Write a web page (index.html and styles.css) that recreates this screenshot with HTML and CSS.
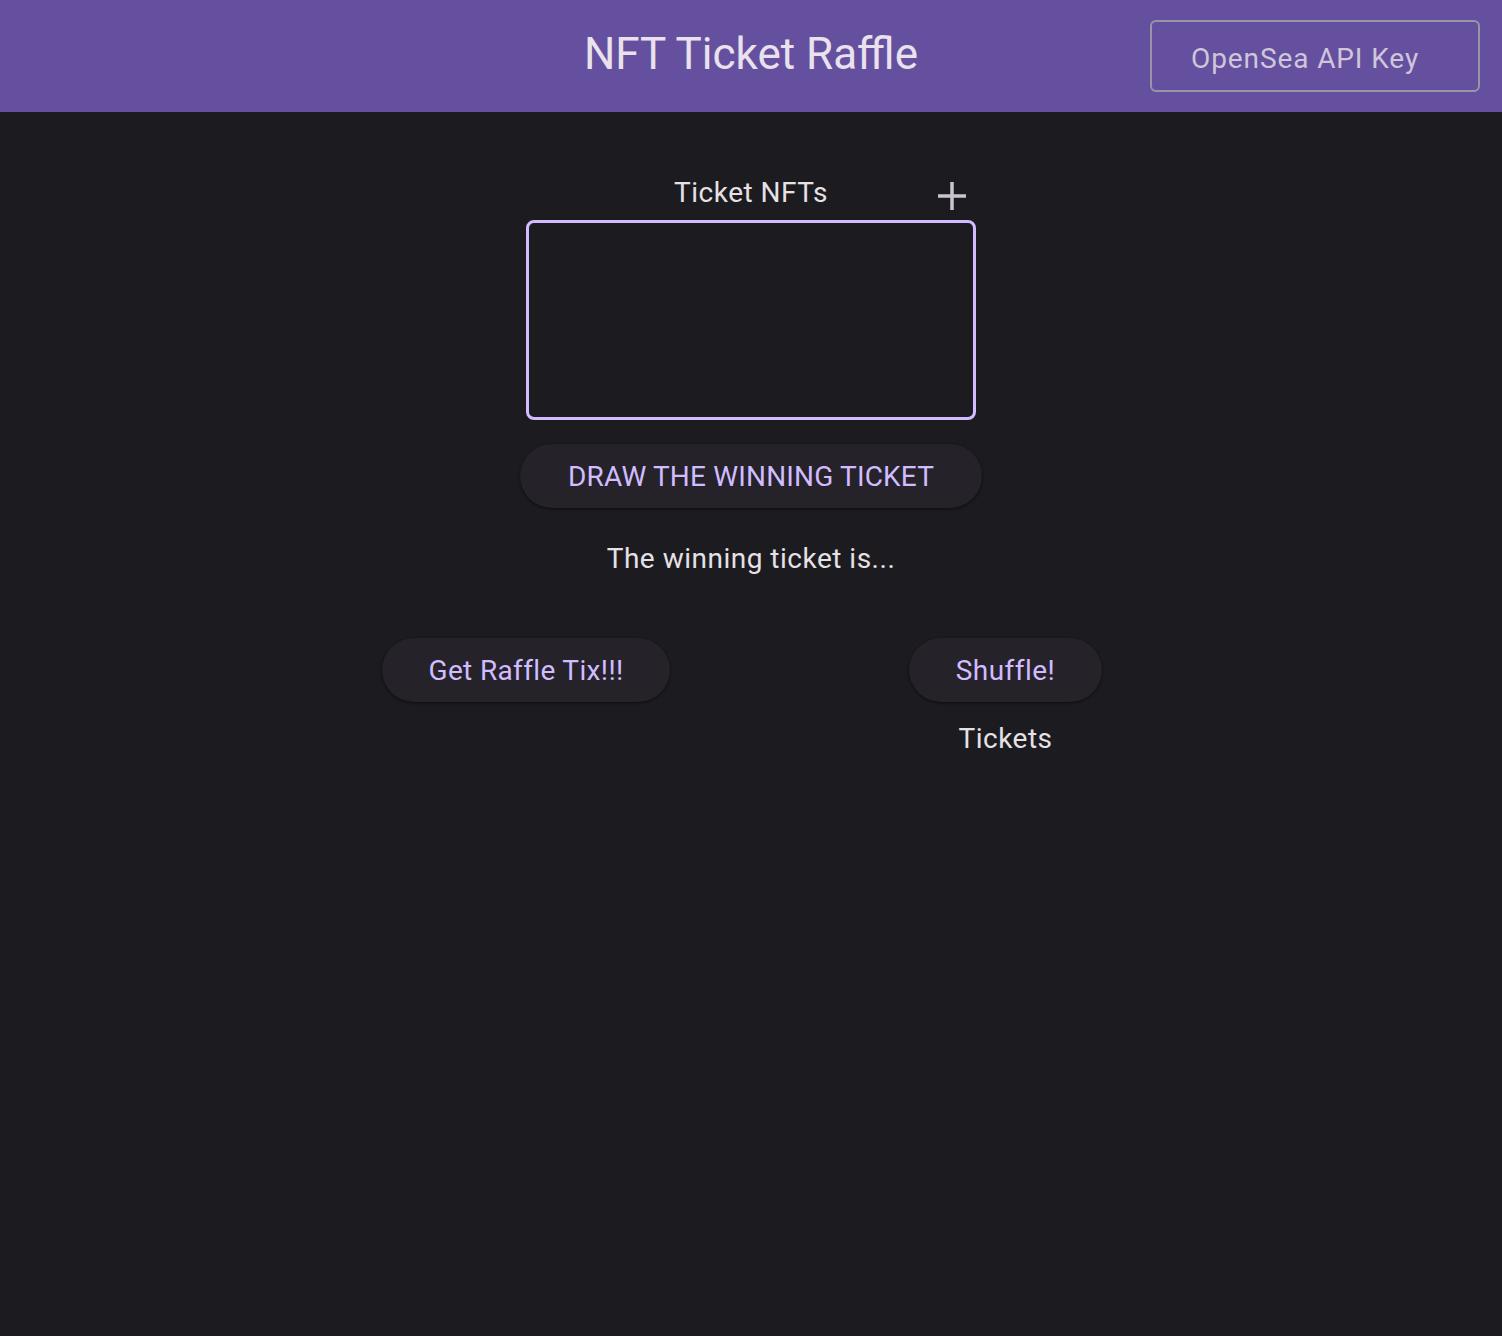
FILE: index.html
```html
<!DOCTYPE html>
<html>
<head>
<meta charset="utf-8">
<link rel="stylesheet" href="styles.css">
</head>
<body>
<header class="appbar">
  <h1 class="title">NFT Ticket Raffle</h1>
  <button class="api-key">OpenSea API Key</button>
</header>
<main class="content">
  <div class="nft-head">
    <span class="nft-label">Ticket NFTs</span>
    <svg class="plus" width="28" height="28" viewBox="0 0 28 28"><path d="M14 0V28M0 14H28" stroke="#CAC4D0" stroke-width="3.5" fill="none"/></svg>
  </div>
  <div class="nft-box"></div>
  <button class="pill draw">DRAW THE WINNING TICKET</button>
  <p class="winner">The winning ticket is...</p>
  <div class="row">
    <button class="pill tix">Get Raffle Tix!!!</button>
    <div class="shuffle-col">
      <button class="pill shuffle">Shuffle!</button>
      <span class="tickets">Tickets</span>
    </div>
  </div>
</main>
</body>
</html>
```
FILE: styles.css
```css
* { box-sizing: border-box; }
html, body { margin: 0; padding: 0; }
body {
  background: #1C1B1F;
  color: #E6E1E5;
  font-family: Roboto, "Noto Sans", sans-serif;
  min-height: 1336px;
}
.appbar {
  height: 112px;
  background: #6550A0;
  position: relative;
  display: flex;
  align-items: center;
  justify-content: center;
}
.title {
  margin: 0;
  font-weight: 400;
  font-size: 44px;
  color: #E9E2EC;
  line-height: 1;
  padding-bottom: 4px;
}
.api-key {
  position: absolute;
  left: 1150px;
  top: 20px;
  width: 330px;
  height: 72px;
  border: 2px solid #9A94A6;
  border-radius: 6px;
  background: transparent;
  color: #CFC6DA;
  font-family: Roboto, sans-serif;
  font-size: 28px;
  letter-spacing: 0.9px;
  text-align: left;
  padding: 4px 0 0 39px;
}
.content {
  display: flex;
  flex-direction: column;
  align-items: center;
}
.nft-head {
  position: relative;
  width: 450px;
  height: 108px;
  display: flex;
  justify-content: center;
  align-items: flex-end;
  padding-bottom: 13px;
}
.nft-label {
  font-size: 28px;
  letter-spacing: 0.5px;
  line-height: 1;
}
.plus {
  position: absolute;
  left: 412px;
  top: 70px;
}
.nft-box {
  width: 450px;
  height: 200px;
  border: 3px solid #D0BCFF;
  border-radius: 8px;
}
.pill {
  height: 64px;
  border: none;
  border-radius: 32px;
  background: #25222A;
  color: #D0BCFF;
  font-family: Roboto, sans-serif;
  font-size: 28px;
  letter-spacing: 0.35px;
  box-shadow: 0 1px 3px rgba(0,0,0,0.35), 0 1px 2px rgba(0,0,0,0.25);
  padding: 0;
}
.draw {
  margin-top: 24px;
  width: 462px;
  letter-spacing: 0.17px;
}
.winner {
  margin: 35px 0 0;
  font-size: 28px;
  letter-spacing: 0.5px;
  line-height: 32px;
}
.row {
  margin-top: 63px;
  display: flex;
  gap: 239px;
  padding-right: 18px;
}
.tix { width: 288px; }
.shuffle-col {
  display: flex;
  flex-direction: column;
  align-items: center;
}
.shuffle { width: 193px; letter-spacing: 0.45px; }
.tickets {
  margin-top: 21px;
  font-size: 28px;
  letter-spacing: 0.5px;
  line-height: 32px;
}
```
